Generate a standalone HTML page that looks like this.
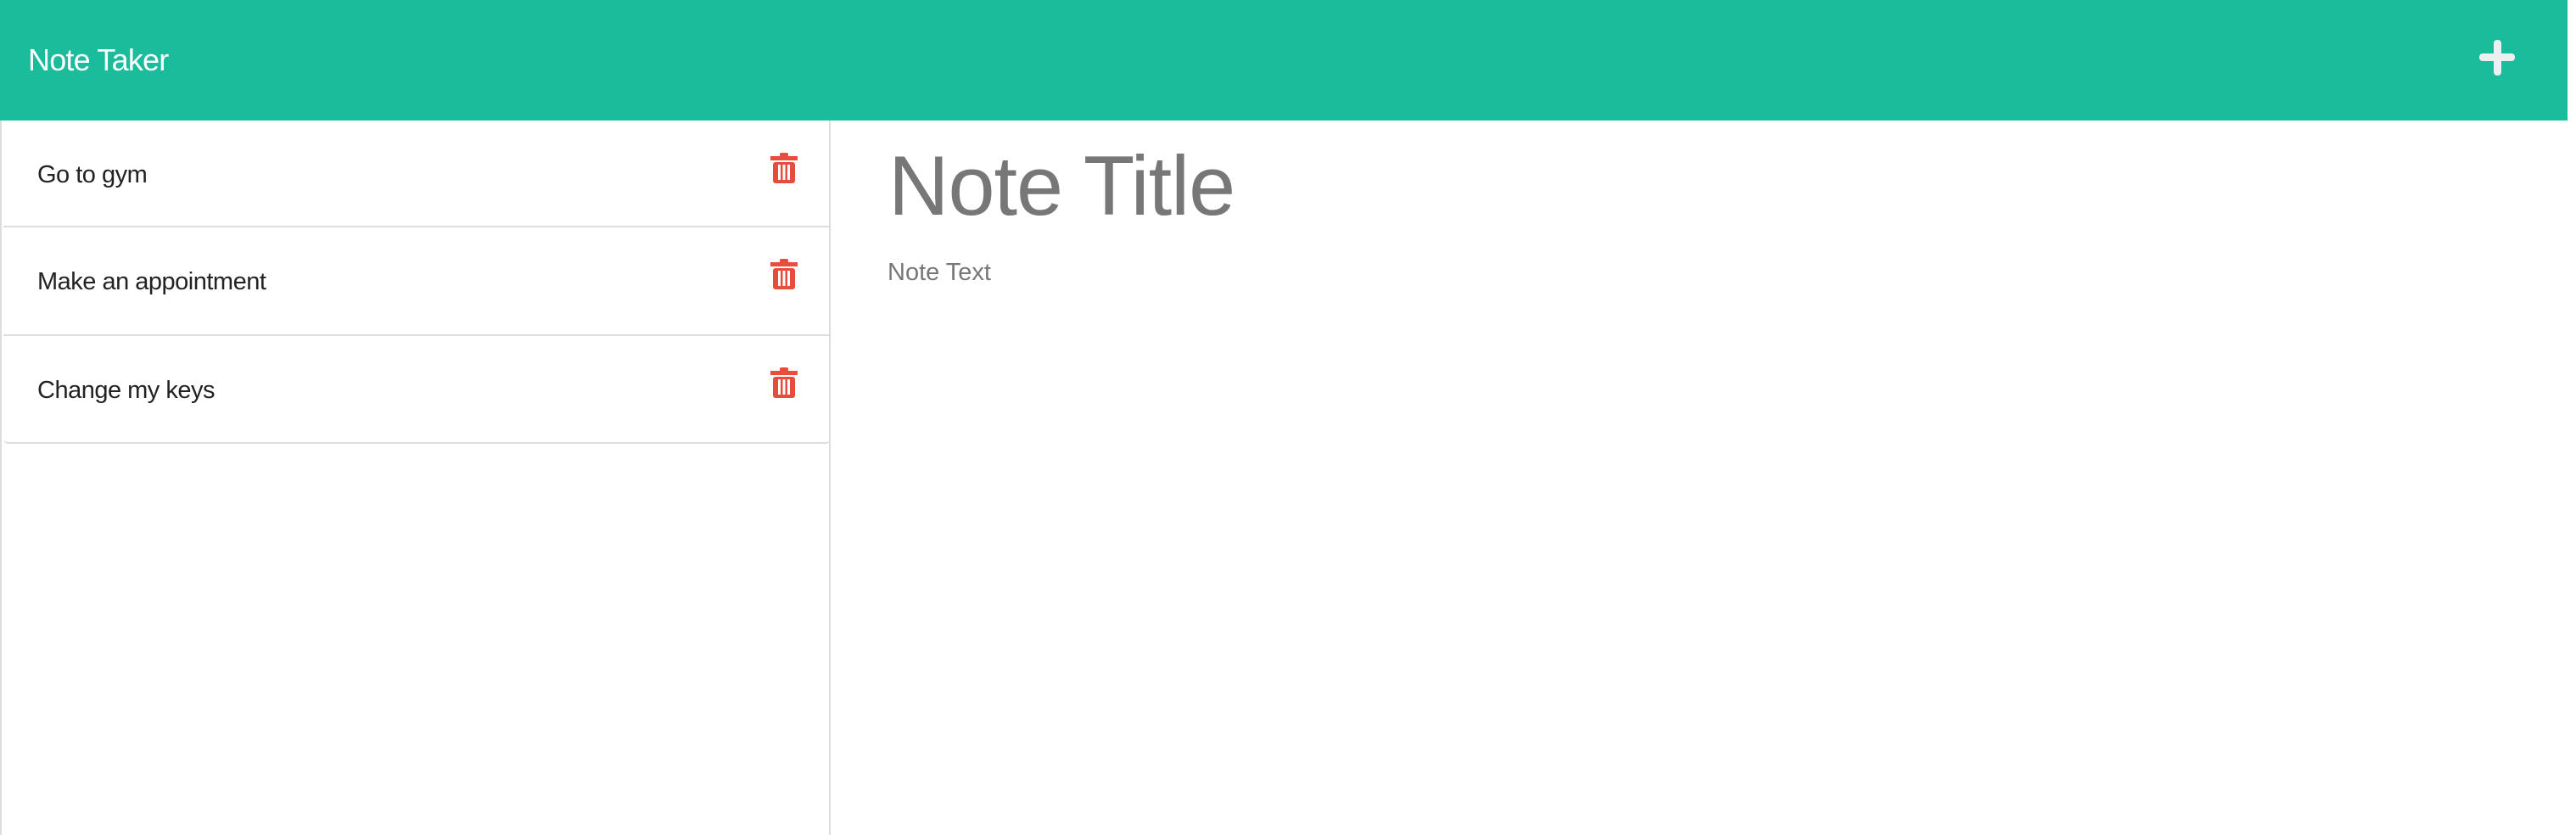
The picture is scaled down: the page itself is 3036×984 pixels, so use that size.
<!DOCTYPE html>
<html><head><style>
html,body{margin:0;padding:0;width:3036px;height:984px;overflow:hidden;background:#fff;font-family:"Liberation Sans",sans-serif}
.nav{position:absolute;left:0;top:0;width:3026px;height:142px;background:#1abc9c}
.brand{position:absolute;left:33px;top:50px;font-size:36px;color:#fff;letter-spacing:-0.8px}
.plus{position:absolute;left:2922px;top:47px;width:42px;height:42px}
.plus:before,.plus:after{content:"";position:absolute;background:#ecf0f1;border-radius:4px}
.plus:before{left:17px;top:0;width:9px;height:42px}
.plus:after{left:0;top:16px;width:42px;height:9px}
.side{position:absolute;left:0;top:142px;width:979px;height:842px;border-right:2px solid #ddd;border-left:2px solid #ddd;box-sizing:border-box}
.item{position:absolute;left:2px;width:975px;border-bottom:2px solid #ddd;box-sizing:border-box}
.item span{position:absolute;left:40px;font-size:29px;color:#222;letter-spacing:-0.5px}
.trash{position:absolute;left:904px;width:32px;height:36px}
.title{position:absolute;left:1047px;top:162px;font-size:99px;color:#777;letter-spacing:-1px}
.text{position:absolute;left:1046px;top:305px;font-size:29px;color:#777}
</style></head><body>
<div class="nav"><div class="brand">Note Taker</div><div class="plus"></div></div>
<div class="side">
<div class="item" style="top:0;height:126px"><span style="top:48px">Go to gym</span>
<svg class="trash" style="top:38px" viewBox="0 0 32 36"><rect x="0" y="4" width="32" height="5" fill="#e74c3c"/><rect x="11" y="0" width="10" height="6" rx="2" fill="#e74c3c"/><rect x="3" y="11" width="26" height="25" rx="3" fill="#e74c3c"/><rect x="9" y="14" width="3" height="18" fill="#fff"/><rect x="14.5" y="14" width="3" height="18" fill="#fff"/><rect x="20" y="14" width="3" height="18" fill="#fff"/></svg></div>
<div class="item" style="top:126px;height:128px"><span style="top:48px">Make an appointment</span>
<svg class="trash" style="top:37px" viewBox="0 0 32 36"><rect x="0" y="4" width="32" height="5" fill="#e74c3c"/><rect x="11" y="0" width="10" height="6" rx="2" fill="#e74c3c"/><rect x="3" y="11" width="26" height="25" rx="3" fill="#e74c3c"/><rect x="9" y="14" width="3" height="18" fill="#fff"/><rect x="14.5" y="14" width="3" height="18" fill="#fff"/><rect x="20" y="14" width="3" height="18" fill="#fff"/></svg></div>
<div class="item" style="top:254px;height:127px;border-radius:0 0 6px 6px"><span style="top:48px">Change my keys</span>
<svg class="trash" style="top:37px" viewBox="0 0 32 36"><rect x="0" y="4" width="32" height="5" fill="#e74c3c"/><rect x="11" y="0" width="10" height="6" rx="2" fill="#e74c3c"/><rect x="3" y="11" width="26" height="25" rx="3" fill="#e74c3c"/><rect x="9" y="14" width="3" height="18" fill="#fff"/><rect x="14.5" y="14" width="3" height="18" fill="#fff"/><rect x="20" y="14" width="3" height="18" fill="#fff"/></svg></div>
</div>
<div class="title">Note Title</div>
<div class="text">Note Text</div>
</body></html>
